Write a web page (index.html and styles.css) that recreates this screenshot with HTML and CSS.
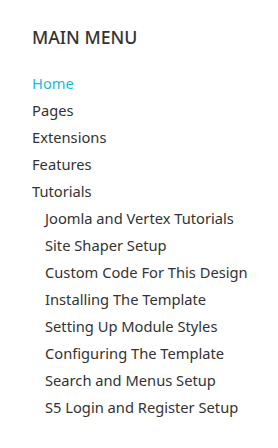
FILE: index.html
```html
<!DOCTYPE html>
<html>
<head>
<meta charset="utf-8">
<link rel="stylesheet" href="styles.css">
</head>
<body>
<div class="module">
  <h3 class="module-title">MAIN MENU</h3>
  <ul class="menu">
    <li><a class="active" href="#">Home</a></li>
    <li><a href="#">Pages</a></li>
    <li><a href="#">Extensions</a></li>
    <li><a href="#">Features</a></li>
    <li><a href="#">Tutorials</a>
      <ul class="submenu">
        <li><a href="#">Joomla and Vertex Tutorials</a></li>
        <li><a href="#">Site Shaper Setup</a></li>
        <li><a href="#">Custom Code For This Design</a></li>
        <li><a href="#">Installing The Template</a></li>
        <li><a href="#">Setting Up Module Styles</a></li>
        <li><a href="#">Configuring The Template</a></li>
        <li><a href="#">Search and Menus Setup</a></li>
        <li><a href="#">S5 Login and Register Setup</a></li>
      </ul>
    </li>
  </ul>
</div>
</body>
</html>
```
FILE: styles.css
```css
html, body {
  margin: 0;
  padding: 0;
  background: #ffffff;
}
body {
  font-family: "Noto Sans", "Open Sans", sans-serif;
  color: #333333;
}
.module {
  padding: 26px 16px 0 32px;
}
.module-title {
  margin: 0 0 22px 0;
  font-size: 17.7px;
  font-weight: 500;
  line-height: 22px;
  color: #333333;
}
.menu, .submenu {
  list-style: none;
  margin: 0;
  padding: 0;
}
.submenu {
  padding-left: 13px;
}
.menu a {
  display: block;
  font-size: 14.7px;
  line-height: 27px;
  white-space: nowrap;
  color: #333333;
  text-decoration: none;
}
.menu a.active {
  color: #1bbcd6;
}
```
